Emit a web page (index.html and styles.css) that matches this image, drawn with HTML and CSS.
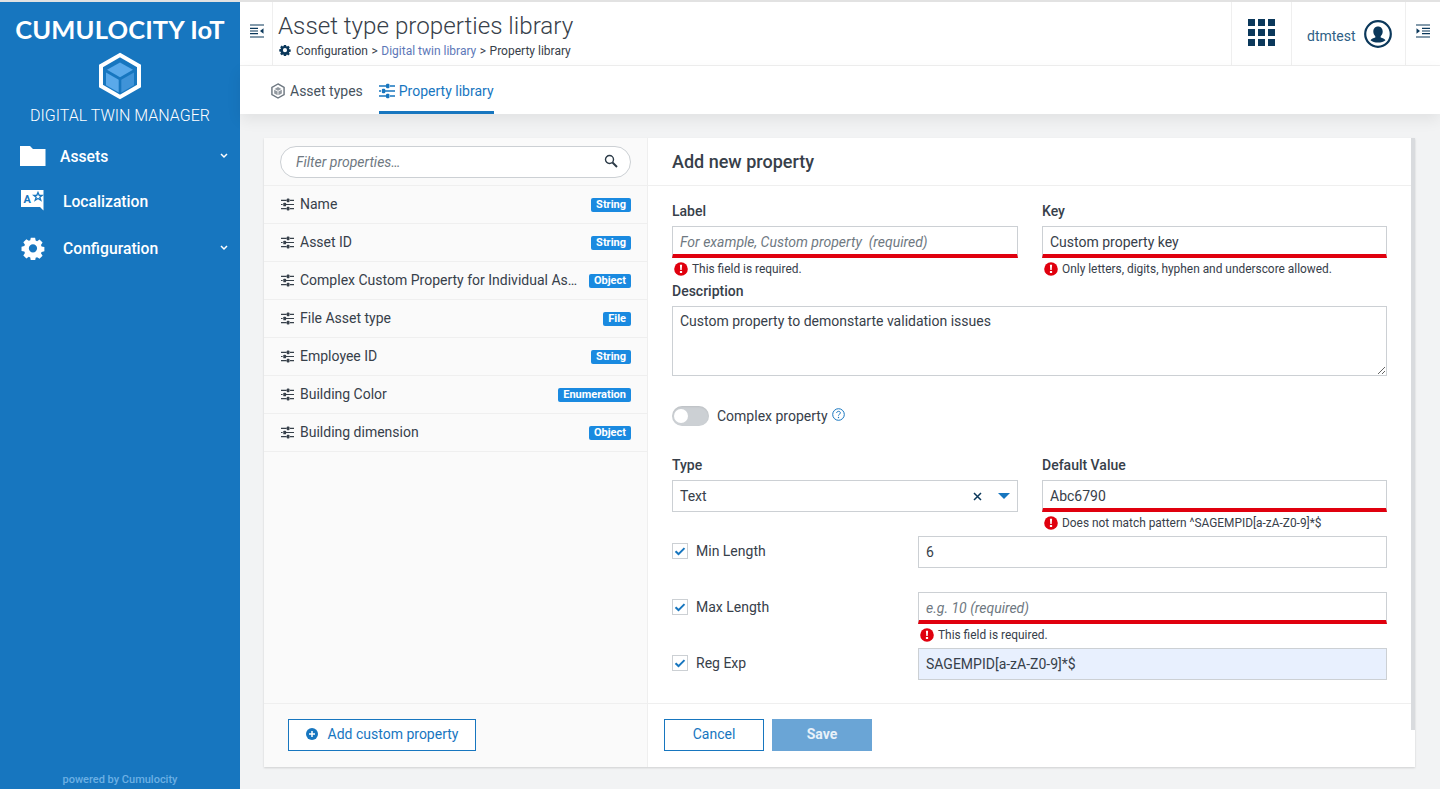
FILE: index.html
```html
<!DOCTYPE html>
<html lang="en">
<head>
<meta charset="utf-8">
<title>Asset type properties library</title>
<link rel="stylesheet" href="styles.css">
</head>
<body>
<svg class="defs" width="0" height="0" aria-hidden="true">
  <defs>
    <symbol id="gear" viewBox="0 0 24 24"><path fill="currentColor" fill-rule="evenodd" d="M9.600 1h4.800l.6 3.100 1.600.7 2.700-1.800 3.400 3.400-1.800 2.700.7 1.600 3.100.6v4.800l-3.100.6-.7 1.600 1.800 2.700-3.400 3.400-2.700-1.800-1.600.7-.6 3.100H9.600L9 22.900l-1.600-.7-2.700 1.800-3.400-3.400 1.800-2.700-.7-1.600L-.7 15.700v-4.800l3.100-.6.7-1.600-1.800-2.700L4.700 2.600l2.700 1.800 1.600-.7zM12 8.200a4.600 4.600 0 1 0 0 9.200 4.600 4.600 0 0 0 0-9.200z" transform="translate(1.150 .85) scale(.9)"/></symbol>
    <symbol id="sliders" viewBox="0 0 16 16"><g fill="none" stroke="currentColor" stroke-width="1.500"><path d="M0 3h7M11 3h5M0 8h2M6 8h10M0 13h7M11 13h5"/></g><g fill="currentColor"><rect x="7" y=".7" width="3.500" height="4.600" rx="1.200"/><rect x="2.800" y="5.700" width="3.500" height="4.600" rx="1.200"/><rect x="7" y="10.700" width="3.500" height="4.600" rx="1.200"/></g></symbol>
    <symbol id="cube" viewBox="0 0 20 20"><path fill="none" stroke="currentColor" stroke-width="1.800" d="M10 1.200l7.600 4.400v8.800L10 18.800l-7.600-4.400V5.600z"/><path fill="currentColor" opacity=".75" d="M10 5l4.300 2.400L10 9.800 5.700 7.400zM5.200 8.300l4.300 2.400v4.700l-4.300-2.400zM14.800 8.300l-4.300 2.400v4.700l4.300-2.400z"/></symbol>
    <symbol id="alert" viewBox="0 0 14 14"><circle cx="7" cy="7" r="6.800" fill="#e0000e"/><path fill="#fff" d="M5.900 2.800h2.200l-.4 5.200H6.300zM5.900 9h2.200v2.100H5.900z"/></symbol>
    <symbol id="check" viewBox="0 0 14 14"><path fill="none" stroke="#1776bf" stroke-width="2" d="M2.500 7.300l3 2.800 6-6"/></symbol>
  </defs>
</svg>
<div class="app">
  <aside class="sidebar">
    <div class="brand">CUMULOCITY IoT</div>
    <svg class="logo" width="44" height="48" viewBox="0 0 44 48" aria-hidden="true">
      <path fill="none" stroke="#fff" stroke-width="4" d="M22 3l19 11v20L22 45 3 34V14z"/>
      <path fill="#5aa9ea" d="M22 10.500l13 7.300-13 7.400-13-7.400z"/>
      <path fill="#5aa9ea" d="M8 20.500l12.700 7.300v12.700L8 33.200z"/>
      <path fill="#3f93d8" d="M36 20.500l-12.700 7.300v12.700L36 33.200z"/>
    </svg>
    <div class="app-name">DIGITAL TWIN MANAGER</div>
    <nav class="nav">
      <a class="nav-item nav-assets">
        <svg class="nav-icon" width="26" height="20" viewBox="0 0 26 20" aria-hidden="true"><path fill="#fff" d="M0 0h10l3 3h12.500v17H0z"/></svg>
        <span class="nav-label">Assets</span>
        <svg class="chev" width="8" height="6" viewBox="0 0 8 6" aria-hidden="true"><path fill="none" stroke="#fff" stroke-width="1.500" d="M1 1l3 3 3-3"/></svg>
      </a>
      <a class="nav-item nav-local">
        <svg class="nav-icon" width="26" height="24" viewBox="0 0 26 24" aria-hidden="true"><path fill="#fff" d="M1 1h22.500v20.500L20 18H1z"/><text x="3.500" y="14" class="icon-text">A</text><path fill="none" stroke="#1776bf" stroke-width="1.300" d="M18 3.500l1.200 2.800h3l-2.400 2 1 3-2.800-1.800-2.800 1.800 1-3-2.400-2h3z"/></svg>
        <span class="nav-label">Localization</span>
      </a>
      <a class="nav-item nav-config">
        <svg class="nav-icon gear-white" width="26" height="24" aria-hidden="true"><use href="#gear"/></svg>
        <span class="nav-label">Configuration</span>
        <svg class="chev" width="8" height="6" viewBox="0 0 8 6" aria-hidden="true"><path fill="none" stroke="#fff" stroke-width="1.500" d="M1 1l3 3 3-3"/></svg>
      </a>
    </nav>
    <div class="powered">powered by Cumulocity</div>
  </aside>

  <div class="main">
    <header class="topbar">
      <div class="cell cell-toggle">
        <svg width="14" height="14" viewBox="0 0 14 14" aria-hidden="true"><path fill="none" stroke="#0b385b" stroke-width="1.200" d="M0 1h14M0 4.300h8M0 7h8M0 9.700h8M0 13h14"/><path fill="#0b385b" d="M13.500 4.200v5.600L10 7z"/></svg>
      </div>
      <div class="titles">
        <h1 class="title">Asset type properties library</h1>
        <div class="crumbs">
          <svg class="crumb-gear" width="12" height="12" aria-hidden="true"><use href="#gear"/></svg>
          <span>Configuration</span><span class="sep">&gt;</span><span class="crumb-link">Digital twin library</span><span class="sep">&gt;</span><span>Property library</span>
        </div>
      </div>
      <div class="cell cell-apps">
        <div class="apps-grid"><i></i><i></i><i></i><i></i><i></i><i></i><i></i><i></i><i></i></div>
      </div>
      <div class="cell cell-user">
        <span class="username">dtmtest</span>
        <svg width="28" height="28" viewBox="0 0 28 28" aria-hidden="true"><circle cx="14" cy="14" r="12.800" fill="#fff" stroke="#0b385b" stroke-width="2.200"/><path fill="#0b385b" d="M14 6.500c3 0 4.700 2.200 4.700 5 0 2-.9 3.700-2 4.700v1.300c1.800.8 3.900 1.300 4.800 2.700-1.700 1.500-4.500 2.300-7.500 2.300s-5.800-.8-7.500-2.300c.9-1.400 3-1.900 4.800-2.700v-1.300c-1.100-1-2-2.700-2-4.700 0-2.800 1.700-5 4.700-5z"/></svg>
      </div>
      <div class="cell cell-right">
        <svg width="14" height="14" viewBox="0 0 14 14" aria-hidden="true"><path fill="none" stroke="#0b385b" stroke-width="1.200" d="M0 1h14M6 4.300h8M6 7h8M6 9.700h8M0 13h14"/><path fill="#0b385b" d="M.5 4.200v5.600L4 7z"/></svg>
      </div>
    </header>
    <div class="tabs">
      <a class="tab">
        <svg class="tab-icon" width="16" height="16" aria-hidden="true"><use href="#cube"/></svg>Asset types
      </a>
      <a class="tab tab-active">
        <svg class="tab-icon" width="16" height="16" aria-hidden="true"><use href="#sliders"/></svg>Property library
      </a>
    </div>

    <main class="content">
      <section class="card">
        <div class="list-col">
          <div class="search-wrap">
            <div class="search">
              <input class="search-input" type="text" placeholder="Filter properties…">
              <svg width="14" height="14" viewBox="0 0 14 14" aria-hidden="true"><circle cx="5.500" cy="5.500" r="4" fill="none" stroke="#2b3a47" stroke-width="1.400"/><path stroke="#2b3a47" stroke-width="2" d="M8.500 8.500l4.500 4.500"/></svg>
            </div>
          </div>
          <ul class="props">
            <li class="prop"><svg class="prop-icon" width="13" height="13" aria-hidden="true"><use href="#sliders"/></svg><span class="prop-name">Name</span><span class="badge">String</span></li>
            <li class="prop"><svg class="prop-icon" width="13" height="13" aria-hidden="true"><use href="#sliders"/></svg><span class="prop-name">Asset ID</span><span class="badge">String</span></li>
            <li class="prop"><svg class="prop-icon" width="13" height="13" aria-hidden="true"><use href="#sliders"/></svg><span class="prop-name">Complex Custom Property for Individual As…</span><span class="badge">Object</span></li>
            <li class="prop"><svg class="prop-icon" width="13" height="13" aria-hidden="true"><use href="#sliders"/></svg><span class="prop-name">File Asset type</span><span class="badge">File</span></li>
            <li class="prop"><svg class="prop-icon" width="13" height="13" aria-hidden="true"><use href="#sliders"/></svg><span class="prop-name">Employee ID</span><span class="badge">String</span></li>
            <li class="prop"><svg class="prop-icon" width="13" height="13" aria-hidden="true"><use href="#sliders"/></svg><span class="prop-name">Building Color</span><span class="badge">Enumeration</span></li>
            <li class="prop"><svg class="prop-icon" width="13" height="13" aria-hidden="true"><use href="#sliders"/></svg><span class="prop-name">Building dimension</span><span class="badge">Object</span></li>
          </ul>
          <div class="col-footer">
            <button class="btn btn-add" type="button">
              <svg width="12" height="12" viewBox="0 0 12 12" aria-hidden="true"><circle cx="6" cy="6" r="6" fill="#1776bf"/><path stroke="#fff" stroke-width="1.500" d="M6 3v6M3 6h6"/></svg>
              Add custom property
            </button>
          </div>
        </div>

        <div class="form-col">
          <h2 class="form-title">Add new property</h2>
          <div class="form-scroll">
            <form class="form-body">
              <div class="two">
                <div>
                  <label class="lbl">Label</label>
                  <input class="inp inp-err" type="text" placeholder="For example, Custom property  (required)">
                  <div class="err"><svg width="14" height="14" aria-hidden="true"><use href="#alert"/></svg>This field is required.</div>
                </div>
                <div>
                  <label class="lbl">Key</label>
                  <input class="inp inp-err" type="text" value="Custom property key">
                  <div class="err"><svg width="14" height="14" aria-hidden="true"><use href="#alert"/></svg>Only letters, digits, hyphen and underscore allowed.</div>
                </div>
              </div>
              <label class="lbl lbl-desc">Description</label>
              <textarea class="inp area">Custom property to demonstarte validation issues</textarea>
              <div class="toggle-row">
                <span class="toggle"><span class="knob"></span></span>
                <span class="toggle-text">Complex property</span>
                <svg class="help" width="13" height="13" viewBox="0 0 13 13" aria-hidden="true"><circle cx="6.500" cy="6.500" r="5.800" fill="none" stroke="#1776bf"/><path fill="none" stroke="#1776bf" d="M4.600 5c.2-1.200 1-1.700 1.900-1.700 1.100 0 1.900.7 1.900 1.600 0 1.300-1.900 1.300-1.900 2.700"/><circle cx="6.500" cy="9.500" r=".7" fill="#1776bf"/></svg>
              </div>
              <div class="two two-type">
                <div>
                  <label class="lbl">Type</label>
                  <div class="inp select">
                    <span class="select-val">Text</span>
                    <svg width="9" height="9" viewBox="0 0 9 9" aria-hidden="true"><path stroke="#0b385b" stroke-width="1.500" d="M1 1l7 7M8 1L1 8"/></svg>
                    <svg class="caret" width="12" height="6" viewBox="0 0 12 6" aria-hidden="true"><path fill="#1776bf" d="M0 0h12L6 6z"/></svg>
                  </div>
                </div>
                <div>
                  <label class="lbl">Default Value</label>
                  <input class="inp inp-err" type="text" value="Abc6790">
                  <div class="err"><svg width="14" height="14" aria-hidden="true"><use href="#alert"/></svg>Does not match pattern ^SAGEMPID[a-zA-Z0-9]*$</div>
                </div>
              </div>
              <div class="cond">
                <span class="chk"><svg width="14" height="14" aria-hidden="true"><use href="#check"/></svg></span>
                <span class="cond-label">Min Length</span>
                <input class="inp" type="text" value="6">
              </div>
              <div class="cond cond-max">
                <span class="chk"><svg width="14" height="14" aria-hidden="true"><use href="#check"/></svg></span>
                <span class="cond-label">Max Length</span>
                <div>
                  <input class="inp inp-err" type="text" placeholder="e.g. 10 (required)">
                  <div class="err"><svg width="14" height="14" aria-hidden="true"><use href="#alert"/></svg>This field is required.</div>
                </div>
              </div>
              <div class="cond cond-reg">
                <span class="chk"><svg width="14" height="14" aria-hidden="true"><use href="#check"/></svg></span>
                <span class="cond-label">Reg Exp</span>
                <input class="inp inp-fill" type="text" value="SAGEMPID[a-zA-Z0-9]*$">
              </div>
            </form>
            <div class="scrollbar"></div>
          </div>
          <div class="col-footer form-footer">
            <button class="btn btn-cancel" type="button">Cancel</button>
            <button class="btn btn-save" type="button">Save</button>
          </div>
        </div>
      </section>
    </main>
  </div>
</div>
</body>
</html>
```
FILE: styles.css
```css
* { box-sizing: border-box; }
html, body { margin: 0; height: 100%; overflow: hidden; }
body { font-family: Roboto, "Liberation Sans", sans-serif; font-size: 14px; color: #37404a; background: #f2f3f4; }
.defs { position: absolute; }
.app { display: flex; height: 789px; border-top: 2px solid #e2e2e2; }

.sidebar { flex: 0 0 240px; background: #1776bf; color: #fff; display: flex; flex-direction: column; align-items: center; }
.brand { font-family: Lato, Roboto, sans-serif; font-weight: 700; font-size: 25.500px; line-height: 30px; margin-top: 12px; white-space: nowrap; letter-spacing: .15px; }
.logo { margin-top: 8px; display: block; }
.app-name { font-size: 16px; font-weight: 300; line-height: 20px; margin-top: 6px; }
.nav { align-self: stretch; display: flex; flex-direction: column; margin-top: 8px; }
.nav-item { display: flex; align-items: center; font-size: 15.700px; font-weight: 500; height: 46px; padding-right: 12px; }
.nav-assets { padding-left: 20px; height: 44px; }
.nav-local, .nav-config { padding-left: 20px; }
.nav-config { height: 48px; }
.nav-icon { flex: none; }
.nav-label { margin-left: 16px; flex: 1; }
.nav-local .nav-label, .nav-config .nav-label { margin-left: 17px; }
.nav-assets .nav-label { margin-left: 14px; }
.icon-text { font: 700 11px Roboto, sans-serif; fill: #1776bf; }
.gear-white { color: #fff; }
.chev { flex: none; }
.powered { margin-top: auto; font-size: 11px; font-weight: 500; color: #6cb0e4; line-height: 18px; }

.main { flex: 1; min-width: 0; display: flex; flex-direction: column; }
.topbar { display: flex; height: 64px; flex: none; background: #fff; border-bottom: 1px solid #efefef; }
.cell { display: flex; align-items: center; justify-content: center; flex: none; }
.cell-toggle { width: 33px; border-right: 1px solid #efefef; padding-bottom: 5px; padding-left: 1px; }
.titles { flex: 1; padding-left: 5px; }
.title { margin: 9px 0 0; font-size: 24.200px; font-weight: 300; line-height: 30px; color: #37404a; }
.crumbs { display: flex; align-items: center; font-size: 12px; line-height: 16px; color: #37404a; margin-top: 2px; }
.crumb-gear { color: #0b385b; margin: 0 5px 2px 1px; }
.crumb-link { color: #5d78b8; }
.sep { margin: 0 3.500px; }
.cell-apps { width: 61px; border-left: 1px solid #efefef; border-right: 1px solid #efefef; }
.apps-grid { display: grid; grid-template-columns: repeat(3, 7px); grid-auto-rows: 7px; gap: 3px; margin-bottom: 2px; }
.apps-grid i { background: #0b385b; display: block; }
.cell-user { width: 114px; justify-content: flex-start; padding-left: 15px; gap: 8px; border-right: 1px solid #efefef; }
.username { font-size: 14px; color: #2f5f86; margin-top: 4px; }
.cell-right { width: 34px; padding-bottom: 5px; }

.tabs { flex: none; height: 48px; background: #fff; display: flex; padding-left: 30px; gap: 16px; box-shadow: 0 6px 14px rgba(0,0,0,.07); position: relative; }
.tab { display: flex; align-items: center; gap: 4px; font-size: 14px; color: #47535e; border-bottom: 3px solid transparent; padding-top: 4px; }
.tab-icon { color: #6d7780; }
.tab-active { color: #1776bf; border-bottom-color: #1776bf; }
.tab-active .tab-icon { color: #1776bf; }

.content { flex: 1; min-height: 0; padding: 24px 25px 22px 24px; }
.card { height: 629px; display: flex; background: #fff; box-shadow: 0 1px 2px rgba(0,0,0,.15); }
.list-col { flex: 0 0 384px; width: 384px; min-width: 0; background: #fafafa; border-right: 1px solid #efefef; display: flex; flex-direction: column; }
.search-wrap { height: 48px; padding: 8px 16px 0; border-bottom: 1px solid #efefef; flex: none; }
.search { display: flex; align-items: center; height: 32px; border: 1px solid #ccd0d4; border-radius: 16px; background: #fff; padding: 0 12px 0 15px; }
.search-input { flex: 1; min-width: 0; border: 0; outline: 0; background: none; font: italic 14px Roboto, sans-serif; padding: 0; color: #37404a; }
.search-input::placeholder { color: #6f7982; opacity: 1; }
.search svg { margin-bottom: 3px; }
.props { list-style: none; margin: 0; padding: 0; flex: 1; min-width: 0; }
.prop { height: 38px; display: flex; align-items: center; padding: 0 16px 0 17px; border-bottom: 1px solid #efefef; min-width: 0; }
.prop-icon { flex: none; color: #37404a; margin-right: 6px; }
.prop-name { flex: 1; min-width: 0; white-space: nowrap; padding-bottom: 2px; }
.badge { flex: none; margin-left: 8px; background: #1a8ae0; color: #fff; font-size: 11px; font-weight: 700; line-height: 14px; padding: 0 5px; border-radius: 2px; }
.col-footer { height: 64px; flex: none; border-top: 1px solid #efefef; padding: 15px 24px 0; display: flex; gap: 8px; align-items: flex-start; }
.btn { height: 32px; font: 14px Roboto, sans-serif; border: 1px solid #1776bf; background: #fff; color: #1776bf; display: inline-flex; align-items: center; justify-content: center; padding: 0 0 2px; }
.btn-add { width: 188px; gap: 10px; }
.form-footer { padding-left: 16px; }
.btn-cancel { width: 100px; }
.btn-save { width: 100px; background: #6aa5d6; border-color: #6aa5d6; color: #e8f1f9; font-weight: 700; }

.form-col { flex: 1; min-width: 0; display: flex; flex-direction: column; }
.form-title { margin: 0; height: 48px; flex: none; border-bottom: 1px solid #efefef; font-size: 18px; font-weight: 500; line-height: 47px; padding-left: 24px; color: #37404a; }
.form-scroll { flex: 1; min-height: 0; display: flex; position: relative; }
.form-body { flex: 1; min-width: 0; padding: 15px 28px 0 24px; }
.scrollbar { position: absolute; right: 0; top: -48px; width: 4px; height: 592px; background: #d9dbde; }
.two { display: grid; grid-template-columns: 346px 345px; gap: 24px; }
.lbl { display: block; font-weight: 500; line-height: 20px; margin-bottom: 5px; font-size: 14px; color: #37404a; }
.lbl-desc { margin-top: 2px; }
.inp { display: block; width: 100%; height: 32px; border: 1px solid #ccd0d4; background: #fff; padding: 0 7px; font: 14px Roboto, sans-serif; color: #37404a; outline: 0; margin: 0; }
.inp::placeholder { font-style: italic; color: #6f7982; opacity: 1; }
.inp-err { border-bottom: 4px solid #e0000e; padding-top: 3px; }
.err { display: flex; align-items: center; gap: 4px; font-size: 11.900px; line-height: 20px; height: 20px; padding-left: 2px; margin-top: 1px; }
.area { height: 70px; padding: 6px 7px; resize: vertical; line-height: 17px; }
.toggle-row { display: flex; align-items: center; height: 20px; margin-top: 30px; }
.toggle { width: 37px; height: 20px; border-radius: 10px; background: #ccd0d4; display: block; margin-right: 8px; padding: 3px 0 0 2px; box-shadow: inset 0 1px 2px rgba(0,0,0,.08); }
.knob { display: block; width: 14px; height: 14px; border-radius: 50%; background: #fff; }
.toggle-text { padding-bottom: 1px; }
.help { margin: 0 0 4px 4px; }
.two-type { margin-top: 29px; }
.select { display: flex; align-items: center; }
.select-val { flex: 1; }
.caret { margin: 0 0 0 16px; }
.cond { display: grid; grid-template-columns: 16px 1fr 469px; align-items: start; column-gap: 8px; margin-top: 3px; }
.cond-max { margin-top: 24px; }
.cond-reg { margin-top: 3px; }
.chk { width: 16px; height: 16px; border: 1px solid #ccd0d4; margin-top: 7px; display: block; background: #fff; }
.chk svg { display: block; margin: 0; }
.cond-label { line-height: 20px; margin-top: 5px; }
.inp-fill { background: #e8f0fe; }
```
